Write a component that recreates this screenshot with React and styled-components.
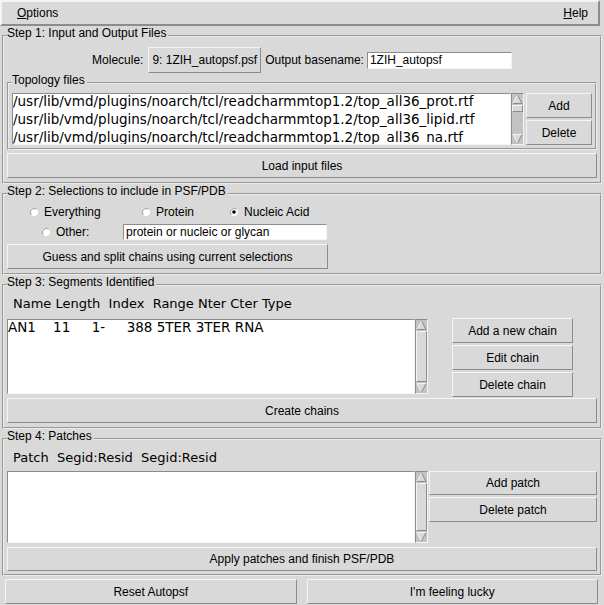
import React from "react"
import styled, { createGlobalStyle } from "styled-components"

const GlobalStyle = createGlobalStyle`
  html, body {
    margin: 0;
    padding: 0;
    background: #d9d9d9;
  }
  body {
    font-family: "Liberation Sans", Arial, sans-serif;
    font-size: 12px;
    color: #000;
  }
  * { box-sizing: border-box; }
`

const Window = styled.div`
  width: 604px;
  height: 605px;
  display: flex;
  flex-direction: column;
  overflow: hidden;
`

const MenuBar = styled.div`
  width: 600px;
  height: 26px;
  flex: 0 0 auto;
  display: flex;
  align-items: center;
  justify-content: space-between;
  padding: 0 10px 0 15px;
  border: 2px solid;
  border-color: #f4f4f4 #8c8c8c #8c8c8c #f4f4f4;
`

const Step = styled.fieldset`
  margin: 0 2px;
  padding: 0 3px ${p => p.$pb}px;
  min-width: 0;
  border: 2px groove #ececec;
  display: flex;
  flex-direction: column;
`

const SubFrame = styled(Step)`
  margin: 0;
`

const Legend = styled.legend`
  padding: 0 2px 6px 0;
  margin: 0;
  line-height: 14px;
  font-size: 12px;
`

const TkButton = styled.button`
  height: ${p => p.$h || 25}px;
  width: ${p => (p.$w ? p.$w + "px" : "auto")};
  flex: ${p => (p.$grow ? "1" : "0 0 auto")};
  margin-top: ${p => p.$mt || 0}px;
  padding: 0 3px;
  background: #d9d9d9;
  border: 1px solid;
  border-color: #f4f4f4 #8c8c8c #8c8c8c #f4f4f4;
  font-family: "Liberation Sans", Arial, sans-serif;
  font-size: 12px;
  color: #000;
  white-space: nowrap;
`

const MolRow = styled.div`
  height: 26px;
  margin-top: 1px;
  display: flex;
  align-items: center;
  justify-content: center;
`

const Label = styled.span`
  margin: 0 ${p => p.$mr || 0}px 0 ${p => p.$ml || 0}px;
`

const Entry = styled.div`
  width: ${p => p.$w}px;
  height: ${p => p.$h}px;
  background: #fff;
  border: 1px solid;
  border-color: #8c8c8c #f4f4f4 #f4f4f4 #8c8c8c;
  padding-left: 2px;
  line-height: ${p => p.$h - 2}px;
  white-space: nowrap;
`

const ListRow = styled.div`
  display: flex;
  height: ${p => p.$h}px;
  margin-top: ${p => p.$mt || 0}px;
`

const ListBox = styled.div`
  width: ${p => (p.$w ? p.$w + "px" : "auto")};
  flex: ${p => (p.$w ? "0 0 auto" : "1")};
  height: ${p => p.$h}px;
  margin-top: ${p => p.$mt || 0}px;
  background: #fff;
  border: 1px solid;
  border-color: #8c8c8c #f4f4f4 #f4f4f4 #8c8c8c;
  overflow: hidden;
  font-family: "DejaVu Sans", sans-serif;
  font-size: ${p => p.$fs || 13.5}px;
`

const ListLines = styled.div`
  margin-top: -2px;
`

const ListLine = styled.div`
  line-height: 18px;
  white-space: pre;
`

const Header = styled.div`
  height: 18px;
  line-height: 18px;
  padding-left: 6px;
  font-family: "DejaVu Sans", sans-serif;
  font-size: 13px;
  white-space: pre;
`

const ScrollTrack = styled.div`
  width: 13px;
  height: ${p => p.$h}px;
  margin-top: ${p => p.$mt || 0}px;
  flex: 0 0 auto;
  display: flex;
  flex-direction: column;
  background: #c3c3c3;
  border: 1px solid;
  border-color: #8c8c8c #f4f4f4 #f4f4f4 #8c8c8c;
`

const Thumb = styled.div`
  flex: ${p => (p.$size ? `0 0 ${p.$size}px` : "1")};
  background: #d9d9d9;
  border: 1px solid;
  border-color: #f4f4f4 #8c8c8c #8c8c8c #f4f4f4;
`

const Trough = styled.div`
  flex: 1;
`

const ArrowSvg = styled.svg`
  display: block;
  flex: 0 0 auto;
`

const SideButtons = styled.div`
  display: flex;
  flex-direction: column;
  gap: 2px;
  width: ${p => (p.$w ? p.$w + "px" : "auto")};
  flex: ${p => (p.$w ? "0 0 auto" : "1")};
  margin-left: ${p => p.$ml || 0}px;
  align-items: stretch;
`

const CenterArea = styled.div`
  flex: 1;
  display: flex;
  justify-content: center;
`

const RadioRow = styled.div`
  height: 16px;
  margin-top: ${p => p.$mt || 0}px;
  padding-left: ${p => p.$pl}px;
  display: flex;
  align-items: center;
`

const RadioItem = styled.label`
  width: ${p => p.$w}px;
  display: flex;
  align-items: center;
  gap: 5px;
  flex: 0 0 auto;
`

const BottomRow = styled.div`
  display: flex;
  gap: 10px;
  padding: 0 6px 0 5px;
  margin-top: 3px;
`

function Arrow({ down }) {
  return (
    <ArrowSvg width="11" height="11" viewBox="0 0 11 11">
      {down ? (
        <>
          <polygon points="1,1.5 10,1.5 5.5,10" fill="#d9d9d9" />
          <line x1="1" y1="1.5" x2="10" y2="1.5" stroke="#f4f4f4" />
          <line x1="1" y1="1.5" x2="5.5" y2="10" stroke="#f4f4f4" />
          <line x1="10" y1="1.5" x2="5.5" y2="10" stroke="#8c8c8c" />
        </>
      ) : (
        <>
          <polygon points="5.5,1 10,9.5 1,9.5" fill="#d9d9d9" />
          <line x1="1" y1="9.5" x2="5.5" y2="1" stroke="#f4f4f4" />
          <line x1="5.5" y1="1" x2="10" y2="9.5" stroke="#8c8c8c" />
          <line x1="1" y1="9.5" x2="10" y2="9.5" stroke="#8c8c8c" />
        </>
      )}
    </ArrowSvg>
  )
}

function Scrollbar({ h, mt, thumb }) {
  return (
    <ScrollTrack $h={h} $mt={mt}>
      <Arrow />
      <Thumb $size={thumb} />
      {thumb ? <Trough /> : null}
      <Arrow down />
    </ScrollTrack>
  )
}

function Radio({ checked, label, w }) {
  return (
    <RadioItem $w={w}>
      <svg width="10" height="10" viewBox="0 0 10 10">
        <circle cx="5" cy="5" r="4" fill="#fff" />
        <path d="M2.2 7.8 A4 4 0 0 1 7.8 2.2" fill="none" stroke="#9a9a9a" />
        {checked ? <circle cx="5" cy="5" r="1.8" fill="#000" /> : null}
      </svg>
      <span>{label}</span>
    </RadioItem>
  )
}

const topFiles = [
  "/usr/lib/vmd/plugins/noarch/tcl/readcharmmtop1.2/top_all36_prot.rtf",
  "/usr/lib/vmd/plugins/noarch/tcl/readcharmmtop1.2/top_all36_lipid.rtf",
  "/usr/lib/vmd/plugins/noarch/tcl/readcharmmtop1.2/top_all36_na.rtf",
]

export default function App() {
  return (
    <Window>
      <GlobalStyle />
      <MenuBar>
        <span><u>O</u>ptions</span>
        <span><u>H</u>elp</span>
      </MenuBar>

      <Step $pb={4}>
        <Legend>Step 1: Input and Output Files</Legend>
        <MolRow>
          <Label $mr={5}>Molecule:</Label>
          <TkButton $h={26}>9: 1ZIH_autopsf.psf</TkButton>
          <Label $ml={4} $mr={3}>Output basename:</Label>
          <Entry $w={145} $h={17}>1ZIH_autopsf</Entry>
        </MolRow>
        <SubFrame $pb={3}>
          <Legend>Topology files</Legend>
          <ListRow $h={52}>
            <ListBox $h={52}>
              <ListLines>
                {topFiles.map(f => (
                  <ListLine key={f}>{f}</ListLine>
                ))}
              </ListLines>
            </ListBox>
            <Scrollbar h={52} thumb={7} />
            <SideButtons $w={66} $ml={2}>
              <TkButton>Add</TkButton>
              <TkButton>Delete</TkButton>
            </SideButtons>
          </ListRow>
        </SubFrame>
        <TkButton $mt={3}>Load input files</TkButton>
      </Step>

      <Step $pb={4}>
        <Legend>Step 2: Selections to include in PSF/PDB</Legend>
        <RadioRow $pl={22}>
          <Radio label="Everything" w={112} />
          <Radio label="Protein" w={88} />
          <Radio label="Nucleic Acid" w={120} checked />
        </RadioRow>
        <RadioRow $pl={34} $mt={4}>
          <Radio label="Other:" w={82} />
          <Entry $w={204} $h={16}>protein or nucleic or glycan</Entry>
        </RadioRow>
        <TkButton $mt={4} $w={321}>Guess and split chains using current selections</TkButton>
      </Step>

      <Step $pb={4}>
        <Legend>Step 3: Segments Identified</Legend>
        <Header>{"Name Length  Index  Range Nter Cter Type"}</Header>
        <ListRow $h={77} $mt={5}>
          <ListBox $w={408} $h={75} $mt={1}>
            <ListLines>
              <ListLine>{"AN1    11     1-     388 5TER 3TER RNA"}</ListLine>
            </ListLines>
          </ListBox>
          <Scrollbar h={75} mt={1} />
          <CenterArea>
            <SideButtons $w={121}>
              <TkButton>Add a new chain</TkButton>
              <TkButton>Edit chain</TkButton>
              <TkButton>Delete chain</TkButton>
            </SideButtons>
          </CenterArea>
        </ListRow>
        <TkButton $mt={3}>Create chains</TkButton>
      </Step>

      <Step $pb={3}>
        <Legend>Step 4: Patches</Legend>
        <Header>{"Patch  Segid:Resid  Segid:Resid"}</Header>
        <ListRow $h={72} $mt={4}>
          <ListBox $w={408} $h={72} />
          <Scrollbar h={72} />
          <SideButtons $ml={1}>
            <TkButton $h={24}>Add patch</TkButton>
            <TkButton>Delete patch</TkButton>
          </SideButtons>
        </ListRow>
        <TkButton $mt={4} $h={24}>Apply patches and finish PSF/PDB</TkButton>
      </Step>

      <BottomRow>
        <TkButton $grow>Reset Autopsf</TkButton>
        <TkButton $grow>I'm feeling lucky</TkButton>
      </BottomRow>
    </Window>
  )
}
